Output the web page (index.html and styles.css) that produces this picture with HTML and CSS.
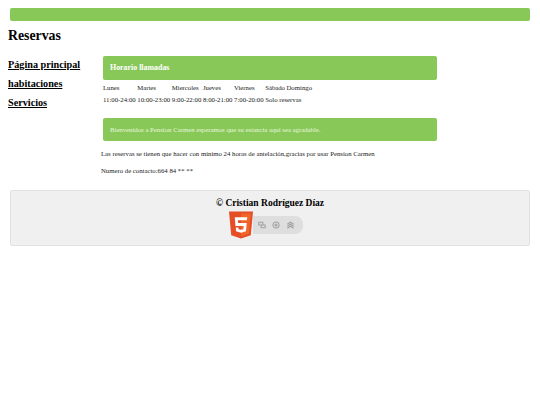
FILE: index.html
```html
<!DOCTYPE html>
<html lang="es">
  <head>
    <meta charset="UTF-8" />
    <title>Reservas</title>
    <link rel="stylesheet" href="styles.css">
  </head>
  <body>
    <div class="top-bar"></div>
    <h1>Reservas</h1>

    <div class="content">
      <ul class="nav">
        <li><a href="#">Página principal</a></li>
        <li><a href="#">habitaciones</a></li>
        <li><a href="#">Servicios</a></li>
      </ul>

      <div class="main">
        <div class="panel panel-title">Horario llamadas</div>
        <table class="hours">
          <tr>
            <td>Lunes</td>
            <td>Martes</td>
            <td>Miercoles</td>
            <td>Jueves</td>
            <td>Viernes</td>
            <td>Sábado</td>
            <td>Domingo</td>
          </tr>
          <tr>
            <td>11:00-24:00</td>
            <td>10:00-23:00</td>
            <td>9:00-22:00</td>
            <td>8:00-21:00</td>
            <td>7:00-20:00</td>
            <td colspan="2">Solo reservas</td>
          </tr>
        </table>
        <div class="panel panel-welcome">Bienvenidos a Pensíon Carmen esperamos que su estancia aquí sea agradable.</div>
        <p class="note">Las reservas se tienen que hacer con mínimo 24 horas de antelación,gracias por usar Pensíon Carmen</p>
        <p class="note">Numero de contacto:664 84 ** **</p>
      </div>
    </div>

    <div class="footer">
      <h3>© Cristian Rodríguez Díaz</h3>
      <div class="badge">
        <svg class="shield" width="24" height="28" viewBox="0 0 25 28">
          <path d="M0 0H25L22.7 24.8 12.5 28 2.3 24.8Z" fill="#e44d26" />
          <path d="M12.5 2V25.6L20.8 23.2 22.7 2Z" fill="#f16529" />
          <path d="M6 6H19L18.7 9H9.2L9.5 12H18.4L17.7 20.6 12.5 22 7.3 20.6 7 16.5H9.8L10 18.4 12.5 19 15 18.4 15.3 15H6.7Z" fill="#fff" />
        </svg>
        <div class="badge-icons">
          <svg width="8" height="8" viewBox="0 0 10 10" fill="none" stroke="#a0a0a0" stroke-width="1.3">
            <path d="M1 1.5H6V5H1ZM4 5V8.5H9V5H6" />
          </svg>
          <svg width="8" height="8" viewBox="0 0 10 10" fill="none" stroke="#a0a0a0" stroke-width="1.3">
            <circle cx="5" cy="5" r="3.8" />
            <circle cx="5" cy="5" r="1.3" />
          </svg>
          <svg width="9" height="8" viewBox="0 0 10 10" fill="none" stroke="#a0a0a0" stroke-width="1.3">
            <path d="M1 4 5 1.5 9 4M1 6.5 5 4 9 6.5M1 9 5 6.5 9 9" />
          </svg>
        </div>
      </div>
    </div>
  </body>
</html>
```

FILE: styles.css
```css
body {
  font-family: "Liberation Serif", "Times New Roman", serif;
  margin: 0;
  padding: 8px 10px 0;
  color: #000;
}
h1 {
  font-size: 13.8px;
  line-height: 17px;
  margin: 6px 0 12px -2px;
}
.top-bar {
  height: 13px;
  background: #88c858;
  border-radius: 2px;
}
.content {
  display: flex;
}
.nav {
  list-style: none;
  margin: 0 0 0 -2px;
  padding: 2px 0 0;
  width: 95px;
  flex: none;
  display: flex;
  flex-direction: column;
  gap: 6px;
  font-size: 10.2px;
  font-weight: bold;
  line-height: 13px;
}
.nav a {
  color: #000;
}
.main {
  width: 334px;
  font-size: 6.75px;
  color: #222;
}
.panel {
  background: #88c858;
  color: #fff;
  border-radius: 2px;
}
.panel-title {
  padding: 0 7px;
  height: 24px;
  line-height: 24px;
  font-size: 7.9px;
  font-weight: bold;
}
.panel-welcome {
  padding: 0 7px;
  height: 23px;
  line-height: 23px;
  margin-top: 13px;
  color: #e9f6de;
}
.hours {
  border-collapse: collapse;
  margin-top: 1px;
}
.hours td {
  padding: 2px 1.5px 1px 0;
  line-height: 9px;
  white-space: nowrap;
}
.hours tr + tr td {
  padding-top: 2px;
}
.note {
  margin: 8px 0 0 -2px;
  line-height: 9px;
}
.note + .note {
  margin-top: 8px;
}
.footer {
  margin-top: 15px;
  height: 56px;
  box-sizing: border-box;
  background: #f0f0f0;
  border: 1px solid #e2e2e2;
  border-radius: 2px;
  padding-top: 6px;
  display: flex;
  flex-direction: column;
  align-items: center;
}
.footer h3 {
  margin: 0;
  font-size: 9.5px;
  line-height: 12px;
}
.badge {
  display: flex;
  align-items: center;
  margin: 2px 8px 0 0;
}
.badge-icons {
  background: #dedede;
  height: 18px;
  width: 50px;
  box-sizing: border-box;
  display: flex;
  align-items: center;
  gap: 6px;
  padding-left: 5px;
  border-radius: 0 8px 8px 0;
}
```
